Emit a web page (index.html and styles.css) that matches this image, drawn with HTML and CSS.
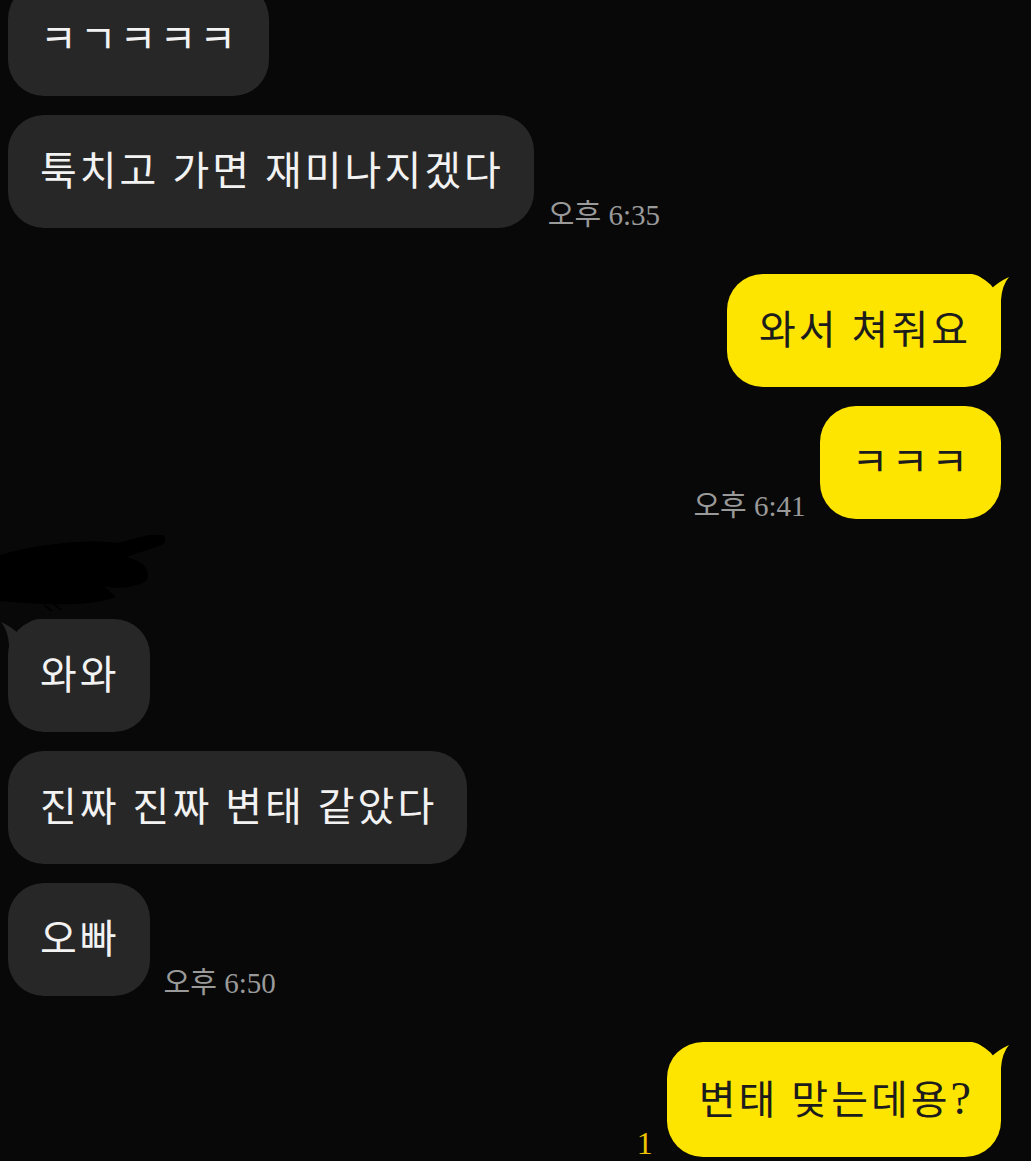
FILE: index.html
```html
<!DOCTYPE html>
<html lang="ko">
<head>
    <meta charset="UTF-8">
    <meta name="viewport" content="width=device-width, initial-scale=1.0">
    <title>채팅</title>
    <link rel="stylesheet" href="styles.css">
</head>
<body>
    <!-- Chat log -->
    <div class="chat">
        <div class="row first">
            <div class="bubble other">ㅋㄱㅋㅋㅋ</div>
        </div>
        <div class="row">
            <div class="bubble other">툭치고 가면 재미나지겠다</div>
            <span class="time">오후 6:35</span>
        </div>

        <div class="row mine group">
            <div class="bubble me">
                와서 쳐줘요
                <svg class="tail tail-right" viewBox="0 0 45 40" width="45" height="40"><path d="M0 0 L7 0 Q20 2 25 16 Q33 8 44 3 Q37 11 36 26 L36 40 L0 40 Z"/></svg>
            </div>
        </div>
        <div class="row mine">
            <span class="time">오후 6:41</span>
            <div class="bubble me">ㅋㅋㅋ</div>
        </div>

        <!-- sender name (blacked out) -->
        <div class="sender">
            <svg viewBox="0 0 170 80" width="170" height="80">
                <path d="M0 20 C40 8 90 4 118 8 L156 -2 C166 -3 168 7 162 10 L126 22 C144 26 152 36 146 46 C132 54 114 54 104 51 L116 62 C90 72 40 70 0 66 Z"/>
                <path d="M44 70 L52 76 M54 69 L61 75" stroke="#000" stroke-width="2"/>
            </svg>
        </div>

        <div class="row">
            <div class="bubble other">
                와와
                <svg class="tail tail-left" viewBox="0 0 45 40" width="45" height="40"><path d="M0 0 L7 0 Q20 2 25 16 Q33 8 44 3 Q37 11 36 26 L36 40 L0 40 Z"/></svg>
            </div>
        </div>
        <div class="row">
            <div class="bubble other">진짜 진짜 변태 같았다</div>
        </div>
        <div class="row">
            <div class="bubble other">오빠</div>
            <span class="time">오후 6:50</span>
        </div>

        <div class="row mine group">
            <span class="unread">1</span>
            <div class="bubble me">
                변태 맞는데용<span class="mark">?</span>
                <svg class="tail tail-right" viewBox="0 0 45 40" width="45" height="40"><path d="M0 0 L7 0 Q20 2 25 16 Q33 8 44 3 Q37 11 36 26 L36 40 L0 40 Z"/></svg>
            </div>
        </div>
    </div>
</body>
</html>
```

FILE: styles.css
```css
/* General Styles */
body {
    margin: 0;
    background-color: #080808;
    font-family: 'Liberation Serif', 'Noto Sans CJK KR', serif;
    height: 1161px;
    overflow: hidden;
}

.chat {
    display: flex;
    flex-direction: column;
    gap: 19px;
    padding: 0 30px 0 8px;
}

.row {
    display: flex;
    align-items: flex-end;
    gap: 14px;
}

.row.first {
    margin-top: -17px;
}

.row.mine {
    justify-content: flex-end;
}

.row.group {
    margin-top: 27px;
}

/* Bubbles */
.bubble {
    position: relative;
    font-size: 40px;
    line-height: 40px;
    letter-spacing: 3px;
    padding: 37px 30px 36px 32px;
    border-radius: 36px;
    white-space: nowrap;
}

.bubble.other {
    background-color: #272727;
    color: #f2f2f2;
}

.bubble.me {
    background-color: #fee500;
    color: #1c1c1c;
}

.mark {
    font-size: 46px;
    letter-spacing: 0;
}

.tail {
    position: absolute;
    top: 0;
}

.bubble.me .tail {
    fill: #fee500;
}

.bubble.other .tail {
    fill: #272727;
}

.tail-right {
    right: -9px;
}

.tail-left {
    left: -8px;
    transform: scaleX(-1);
}

/* Meta text */
.time {
    font-size: 29px;
    line-height: 29px;
    color: #9a9a9a;
    margin-bottom: -2px;
}

.unread {
    font-size: 32px;
    line-height: 27px;
    color: #f0c400;
}

.sender {
    height: 62px;
    margin-left: -8px;
}

.sender svg {
    display: block;
    margin-top: -3px;
    fill: #000;
}
```
